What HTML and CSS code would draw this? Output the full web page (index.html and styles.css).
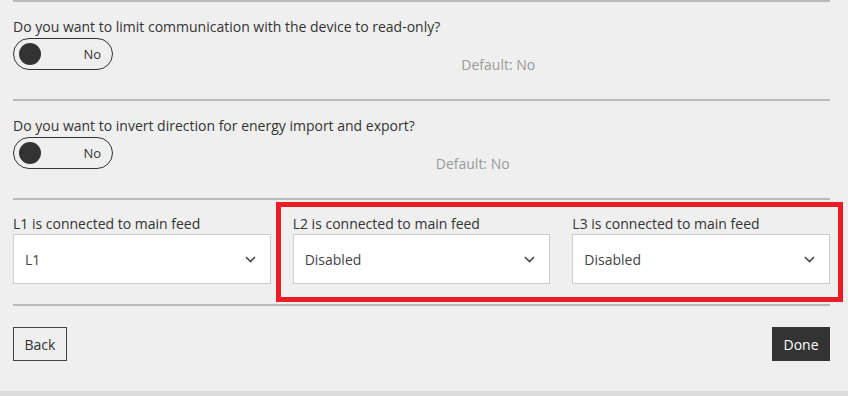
FILE: index.html
```html
<!DOCTYPE html>
<html lang="en">
<head>
<meta charset="utf-8">
<title>Device settings</title>
<link rel="stylesheet" href="styles.css">
</head>
<body>
<div class="page">
  <div class="content">
    <section class="question">
      <div class="question-main">
        <div class="question-text">Do you want to limit communication with the device to read-only?</div>
        <div class="toggle"><span class="knob"></span><span class="toggle-label">No</span></div>
      </div>
      <div class="default">Default: No</div>
    </section>
    <section class="question">
      <div class="question-main">
        <div class="question-text">Do you want to invert direction for energy import and export?</div>
        <div class="toggle"><span class="knob"></span><span class="toggle-label">No</span></div>
      </div>
      <div class="default">Default: No</div>
    </section>
    <section class="feeds">
      <div class="field">
        <div class="field-label">L1 is connected to main feed</div>
        <div class="select"><span>L1</span><svg class="chev" width="11" height="7" viewBox="0 0 11 7"><path d="M1 1 L5.5 5.5 L10 1" fill="none" stroke="#444" stroke-width="1.6"/></svg></div>
      </div>
      <div class="field">
        <div class="field-label">L2 is connected to main feed</div>
        <div class="select"><span>Disabled</span><svg class="chev" width="11" height="7" viewBox="0 0 11 7"><path d="M1 1 L5.5 5.5 L10 1" fill="none" stroke="#444" stroke-width="1.6"/></svg></div>
      </div>
      <div class="field">
        <div class="field-label">L3 is connected to main feed</div>
        <div class="select"><span>Disabled</span><svg class="chev" width="11" height="7" viewBox="0 0 11 7"><path d="M1 1 L5.5 5.5 L10 1" fill="none" stroke="#444" stroke-width="1.6"/></svg></div>
      </div>
      <div class="highlight"></div>
    </section>
    <div class="actions">
      <button class="btn btn-back">Back</button>
      <button class="btn btn-done">Done</button>
    </div>
  </div>
  <div class="footer-strip"></div>
</div>
</body>
</html>
```

FILE: styles.css
```css
html, body {
  margin: 0;
  padding: 0;
}
body {
  background: #efefef;
  font-family: "Open Sans", "Liberation Sans", sans-serif;
  font-size: 14px;
  color: #333;
}
.page {
  width: 848px;
  height: 396px;
  display: flex;
  flex-direction: column;
  overflow: hidden;
}
.content {
  height: 391px;
  padding: 0 18px 0 13px;
  box-sizing: border-box;
}
.question {
  border-top: 2px solid #bbb;
  padding: 16px 0 25px;
  display: flex;
  align-items: flex-start;
  gap: 21px;
}
.question-text {
  line-height: 18px;
  margin-bottom: 2px;
}
.toggle {
  width: 100px;
  height: 32px;
  box-sizing: border-box;
  border: 1px solid #333;
  border-radius: 16px;
  display: flex;
  align-items: center;
  justify-content: space-between;
  padding: 0 11px 0 5px;
}
.knob {
  width: 22px;
  height: 22px;
  border-radius: 50%;
  background: #333;
}
.toggle-label {
  font-size: 13px;
  line-height: 18px;
}
.default {
  margin-top: 38px;
  line-height: 18px;
  color: #9a9a9a;
}
.feeds {
  position: relative;
  border-top: 2px solid #bbb;
  border-bottom: 2px solid #bbb;
  padding: 15px 0 20px;
  display: grid;
  grid-template-columns: repeat(3, 1fr);
  column-gap: 22px;
}
.field-label {
  line-height: 18px;
  margin-bottom: 1px;
}
.select {
  height: 50px;
  box-sizing: border-box;
  background: #fff;
  border: 1px solid #ccc;
  display: flex;
  align-items: center;
  justify-content: space-between;
  padding: 0 14px 0 11px;
  color: #444;
}
.select span {
  line-height: 18px;
  margin-top: 2px;
}
.chev {
  display: block;
  margin-top: 1px;
}
.highlight {
  position: absolute;
  left: 263px;
  top: 2px;
  width: 567px;
  height: 100px;
  box-sizing: border-box;
  border: 5px solid #ea1c26;
  pointer-events: none;
}
.actions {
  display: flex;
  justify-content: space-between;
  padding-top: 21px;
}
.btn {
  height: 34px;
  box-sizing: border-box;
  font-family: "Open Sans", "Liberation Sans", sans-serif;
  font-size: 14px;
  padding: 0 10px;
  border-radius: 0;
  cursor: pointer;
}
.btn-back {
  background: transparent;
  border: 1px solid #444;
  color: #333;
  width: 54px;
}
.btn-done {
  background: #333;
  border: 1px solid #333;
  color: #fff;
  width: 58px;
}
.footer-strip {
  height: 5px;
  background: #dcdcdc;
}
```
